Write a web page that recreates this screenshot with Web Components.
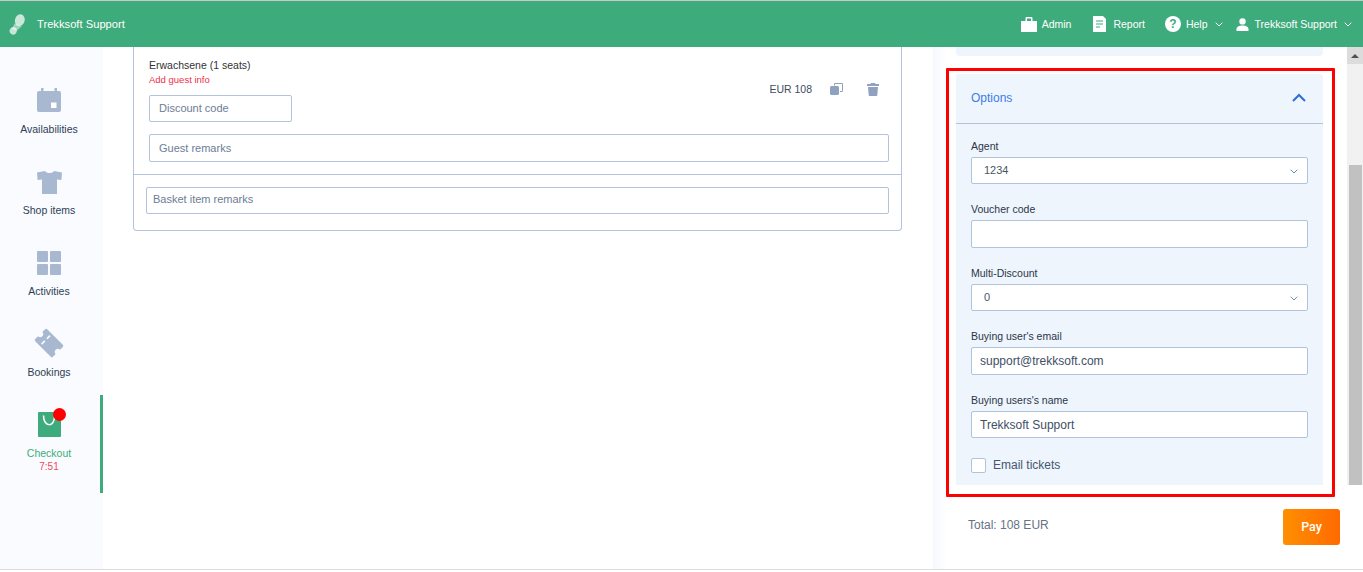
<!DOCTYPE html>
<html>
<head>
<meta charset="utf-8">
<title>Checkout</title>
<style>
  html, body { margin: 0; height: 572px; overflow: hidden; background: #fff; }
  body { font-family: "Liberation Sans", Arial, sans-serif; font-size: 12px; }
</style>
</head>
<body>
<checkout-app></checkout-app>

<script>
const CHEVRON = `<svg width="8" height="5" viewBox="0 0 8 5"><path d="M.7.7 4 4l3.3-3.3" fill="none" stroke="currentColor" stroke-width="1"/></svg>`;

class AppHeader extends HTMLElement {
  constructor() {
    super();
    this.attachShadow({ mode: "open" });
    this.shadowRoot.innerHTML = `
      <style>
        :host { display: flex; align-items: center; height: 46px; background: #3dab7b; color: #fff; font-size: 10.5px; }
        .brand { display: flex; align-items: center; margin-left: 9px; font-size: 11.2px; }
        .brand span { margin-left: 12px; }
        .links { display: flex; align-items: center; margin-left: auto; }
        .link { display: flex; align-items: center; }
        .link svg { display: block; }
        .admin { margin-right: 22px; }
        .admin span { margin-left: 5px; }
        .report { margin-right: 20px; }
        .report span { margin-left: 7px; }
        .help { margin-right: 13px; }
        .help span.t { margin-left: 5px; }
        .help svg:last-child, .user svg:last-child { margin-left: 7px; }
        .q { width: 16px; height: 16px; border-radius: 50%; background: #fff; color: #3dab7b; font-weight: bold; font-size: 12px; line-height: 16px; text-align: center; }
        .user { margin-right: 11px; }
        .user span { margin-left: 6px; }
      </style>
      <div class="brand">
        <svg width="16" height="21" viewBox="0 0 16 21">
          <g fill="#fff">
            <ellipse cx="10.8" cy="6.200" rx="4.800" ry="6" transform="rotate(18 10.800 6.200)" fill-opacity=".72"/>
            <path d="M5.500 9.500 13 12 8 16.500 3 15z" fill-opacity=".5"/>
            <ellipse cx="4.200" cy="16.800" rx="3.600" ry="3.800" transform="rotate(18 4.200 16.800)" fill-opacity=".7"/>
          </g>
        </svg>
        <span>Trekksoft Support</span>
      </div>
      <div class="links">
        <div class="link admin">
          <svg width="16" height="15" viewBox="0 0 16 15"><path d="M4.500 4V1.200C4.500.5 5 0 5.700 0h4.600c.7 0 1.200.5 1.200 1.200V4H16v11H0V4zM6 4h4V1.500H6z" fill="#fff" fill-rule="evenodd"/></svg>
          <span>Admin</span>
        </div>
        <div class="link report">
          <svg width="13" height="16" viewBox="0 0 13 16"><path d="M0 0h10l3 3v13H0z" fill="#fff"/><path d="M3 5h7M3 8h7M3 11h4" stroke="#3dab7b" stroke-width="1.200"/></svg>
          <span>Report</span>
        </div>
        <div class="link help">
          <div class="q">?</div>
          <span class="t">Help</span>
          ${CHEVRON}
        </div>
        <div class="link user">
          <svg width="13" height="13" viewBox="0 0 13 13"><circle cx="6.500" cy="3.400" r="3.200" fill="#fff"/><path d="M.5 13v-1.800C.5 8.800 3 7.500 6.500 7.500s6 1.300 6 3.700V13z" fill="#fff"/></svg>
          <span>Trekksoft Support</span>
          ${CHEVRON}
        </div>
      </div>
    `;
  }
}

class NavItem extends HTMLElement {
  constructor() {
    super();
    this.attachShadow({ mode: "open" });
    this.shadowRoot.innerHTML = `
      <style>
        :host { display: flex; flex-direction: column; align-items: center; height: 81px; width: 98px; font-size: 10.5px; color: #2f3e55; }
        :host([active]) { height: 82px; padding: 16px 2px 0 0; border-right: 3px solid #3dab7b; color: #3dab7b; }
        .icon { height: 24px; display: flex; align-items: center; justify-content: center; position: relative; }
        :host([active]) .icon { height: 26px; }
        .label { margin-top: 8px; line-height: 16px; white-space: nowrap; }
      </style>
      <div class="icon"><slot name="icon"></slot></div>
      <div class="label"><slot></slot></div>
      <slot name="extra"></slot>
    `;
  }
}

class SideNav extends HTMLElement {
  constructor() {
    super();
    this.attachShadow({ mode: "open" });
    this.shadowRoot.innerHTML = `
      <style>
        :host { display: block; width: 103px; flex: none; background: #f9fbff; padding-top: 42px; box-sizing: border-box; }
        .timer { font-size: 10px; line-height: 11px; color: #ef4a63; text-align: center; }
        .dot { position: absolute; top: -3px; left: 15px; width: 13px; height: 13px; border-radius: 50%; background: #ff0000; }
        svg { display: block; }
      </style>
      <nav-item>
        <svg slot="icon" width="24" height="24" viewBox="0 0 24 24" style="margin-top:-2px"><path d="M4 0h2.500v3h11V0H20v3h2a2 2 0 0 1 2 2v17a2 2 0 0 1-2 2H2a2 2 0 0 1-2-2V5a2 2 0 0 1 2-2h2z" fill="#a7b8d0"/><rect x="14" y="14.500" width="5.500" height="5.500" fill="#fff"/></svg>
        Availabilities
      </nav-item>
      <nav-item>
        <svg slot="icon" width="25" height="23" viewBox="0 0 25 23"><path d="M8 0c1 1.500 2.500 2 4.500 2S16 1.500 17 0l8 1.500-.6 7.500-4.400-.5V23H5V8.500L.6 9 0 1.500z" fill="#a7b8d0"/></svg>
        Shop items
      </nav-item>
      <nav-item>
        <svg slot="icon" width="24" height="24" viewBox="0 0 24 24"><g fill="#a7b8d0"><rect x="0" y="0" width="11" height="11" rx="1"/><rect x="13" y="0" width="11" height="11" rx="1"/><rect x="0" y="13" width="11" height="11" rx="1"/><rect x="13" y="13" width="11" height="11" rx="1"/></g></svg>
        Activities
      </nav-item>
      <nav-item style="height:63px">
        <svg slot="icon" width="32" height="32" viewBox="0 0 32 32" style="margin:-5px 0 -3px">
          <g transform="rotate(45 16 16)">
            <path d="M5 7.500h22a1.500 1.500 0 0 1 1.500 1.500v4a3 3 0 0 0 0 6v4a1.500 1.500 0 0 1-1.500 1.500H5A1.500 1.500 0 0 1 3.500 23v-4a3 3 0 0 0 0-6V9A1.500 1.500 0 0 1 5 7.500z" fill="#a7b8d0"/>
            <path d="M11.500 10v4.500M11.500 17.500V22" stroke="#f9fbff" stroke-width="1.700"/>
          </g>
        </svg>
        Bookings
      </nav-item>
      <nav-item active style="height:82px">
        <svg slot="icon" width="23" height="25" viewBox="0 0 23 25"><rect width="23" height="25" rx="1" fill="#3dab7b"/><path d="M5.500 3.500c0 12 11 12 11 1" fill="none" stroke="#fff" stroke-width="1.500"/></svg>
        <div class="dot" slot="icon"></div>
        Checkout
        <div class="timer" slot="extra">7:51</div>
      </nav-item>
    `;
  }
}

class TextBox extends HTMLElement {
  constructor() {
    super();
    this.attachShadow({ mode: "open" });
    this.shadowRoot.innerHTML = `
      <style>
        :host { display: flex; align-items: center; box-sizing: border-box; height: 28px; padding: 0 9px 0 8px; background: #fff; border: 1px solid #b3c3dc; border-radius: 2px; font-size: 12px; color: #3e4f66; white-space: nowrap; }
        :host([hint]) { font-size: 11px; color: #6c7d96; padding-left: 9px; }
        :host([select]) { height: 27px; padding-left: 12px; padding-bottom: 1px; font-size: 11px; color: #4a5568; }
        svg { display: none; margin-left: auto; color: #6d8fb5; }
        :host([select]) svg { display: block; margin-top: 2px; }
      </style>
      <slot></slot>
      <svg width="8" height="5" viewBox="0 0 8 5"><path d="M.7.7 4 4l3.300-3.300" fill="none" stroke="currentColor"/></svg>
    `;
  }
}

class FormField extends HTMLElement {
  constructor() {
    super();
    this.attachShadow({ mode: "open" });
    this.shadowRoot.innerHTML = `
      <style>
        :host { display: block; margin-bottom: 17px; }
        .label { font-size: 10.500px; line-height: 16px; color: #2b3648; margin-bottom: 3px; }
      </style>
      <div class="label">${this.getAttribute("label")}</div>
      <slot></slot>
    `;
  }
}

class BasketCard extends HTMLElement {
  constructor() {
    super();
    this.attachShadow({ mode: "open" });
    this.shadowRoot.innerHTML = `
      <style>
        :host { display: block; width: 769px; box-sizing: border-box; border: 1px solid #b3c3dc; border-top: 0; border-radius: 0 0 4px 4px; }
        .guest { padding: 10px 12px 12px 15px; border-bottom: 1px solid #b3c3dc; }
        .top { display: flex; justify-content: space-between; }
        .title { font-size: 10.500px; line-height: 16px; color: #333; }
        .warn { font-size: 9.500px; line-height: 14px; color: #ef304c; margin-bottom: 8px; }
        .discount { width: 143px; height: 27px; padding-bottom: 2px; }
        .guest-remarks { margin-top: 12px; }
        .price { display: flex; align-items: center; margin: 24px 10px 0 0; height: 16px; font-size: 10.500px; color: #3e4c60; }
        .price svg { display: block; }
        .copy { margin: 0 24px 0 18px; }
        .basket { padding: 12px 12px 16px; }
        .basket text-box { height: 27px; padding-left: 6px; padding-bottom: 4px; }
      </style>
      <div class="guest">
        <div class="top">
          <div>
            <div class="title">Erwachsene (1 seats)</div>
            <div class="warn">Add guest info</div>
            <text-box hint class="discount">Discount code</text-box>
          </div>
          <div class="price">
            <span>EUR 108</span>
            <svg class="copy" width="13" height="12" viewBox="0 0 13 12"><path d="M4 2.500V1.200C4 .5 4.500 0 5.200 0h6.600C12.500 0 13 .5 13 1.200v6.600c0 .7-.5 1.200-1.200 1.200H10V8h2V1H5v1.500z" fill="#8ea2c0"/><rect y="3" width="9" height="9" rx="1.500" fill="#8ea2c0"/></svg>
            <svg width="12" height="13" viewBox="0 0 12 13"><path d="M4 0h4l.5 1H12v2H0V1h3.500zM1 4h10l-.7 8a1 1 0 0 1-1 1H2.700a1 1 0 0 1-1-1z" fill="#8ea2c0"/></svg>
          </div>
        </div>
        <text-box hint class="guest-remarks">Guest remarks</text-box>
      </div>
      <div class="basket">
        <text-box hint>Basket item remarks</text-box>
      </div>
    `;
  }
}

class OptionsPanel extends HTMLElement {
  constructor() {
    super();
    this.attachShadow({ mode: "open" });
    this.shadowRoot.innerHTML = `
      <style>
        :host { display: block; background: #eef5fd; border-radius: 3px 3px 0 0; }
        .head { display: flex; align-items: center; justify-content: space-between; box-sizing: content-box; height: 47px; padding: 0 17px 2px 15px; border-bottom: 1px solid #b3c3dc; font-size: 12px; color: #3b7de8; }
        .head svg { display: block; }
        .body { padding: 14px 15px 12px; }
        .check { display: flex; align-items: center; margin-top: 20px; font-size: 12px; color: #46566e; }
        .check span { margin-top: -2px; }
        .box { width: 15px; height: 15px; box-sizing: border-box; background: #fff; border: 1px solid #b3c3dc; border-radius: 2px; margin-right: 7px; }
      </style>
      <div class="head">
        <span>Options</span>
        <svg width="14" height="9" viewBox="0 0 14 9"><path d="M1 8l6-6 6 6" fill="none" stroke="#2a6fdb" stroke-width="2"/></svg>
      </div>
      <div class="body">
        <form-field label="Agent"><text-box select>1234</text-box></form-field>
        <form-field label="Voucher code"><text-box></text-box></form-field>
        <form-field label="Multi-Discount"><text-box select>0</text-box></form-field>
        <form-field label="Buying user's email"><text-box>support@trekksoft.com</text-box></form-field>
        <form-field label="Buying users's name" style="margin-bottom:0"><text-box style="height:27px">Trekksoft Support</text-box></form-field>
        <div class="check"><div class="box"></div><span>Email tickets</span></div>
      </div>
    `;
  }
}

class PayPanel extends HTMLElement {
  constructor() {
    super();
    this.attachShadow({ mode: "open" });
    this.shadowRoot.innerHTML = `
      <style>
        :host { display: block; width: 414px; flex: none; box-sizing: border-box; background: linear-gradient(90deg, #f6f8fe, #fff 14px); }
        .stub { height: 9px; margin: 0 24px 12px 23px; background: #eef5fd; border-radius: 0 0 4px 4px; }
        .marked { margin: 0 12px 0 13px; padding: 3px 9px 9px 7px; border: 3px solid #ff0000; border-radius: 1px; }
        .foot { display: flex; align-items: center; justify-content: space-between; margin: 12px 7px 0 35px; font-size: 12px; color: #667285; }
        .foot span { margin-top: -4px; }
        .pay { width: 57px; height: 36px; line-height: 36px; text-align: center; color: #fff; font-family: Roboto, sans-serif; font-weight: 500; font-size: 12.500px; border-radius: 3px; background: linear-gradient(90deg, #ff8f00, #ff6a00); }
      </style>
      <div class="stub"></div>
      <div class="marked"><options-panel></options-panel></div>
      <div class="foot"><span>Total: 108 EUR</span><div class="pay">Pay</div></div>
    `;
  }
}

class PageScrollbar extends HTMLElement {
  constructor() {
    super();
    this.attachShadow({ mode: "open" });
    this.shadowRoot.innerHTML = `
      <style>
        :host { display: block; width: 16px; flex: none; height: 438px; background: #f1f1f1; }
        .up { display: flex; align-items: center; justify-content: center; height: 17px; background: #dcdcdc; }
        .up i { width: 0; height: 0; border: 4px solid transparent; border-top: 0; border-bottom: 4px solid #505050; }
        .thumb { height: 320px; margin: 101px 1px 0 2px; background: #c1c1c1; }
      </style>
      <div class="up"><i></i></div>
      <div class="thumb"></div>
    `;
  }
}

class CheckoutApp extends HTMLElement {
  constructor() {
    super();
    this.attachShadow({ mode: "open" });
    this.shadowRoot.innerHTML = `
      <style>
        :host { display: flex; flex-direction: column; height: 572px; border-top: 1px solid #c9c9c9; box-sizing: border-box; }
        .row { display: flex; height: 522px; border-bottom: 1px solid #dcdcdc; }
        .main { flex: 1; padding-left: 30px; overflow: hidden; }
      </style>
      <app-header></app-header>
      <div class="row">
        <side-nav></side-nav>
        <div class="main"><basket-card></basket-card></div>
        <pay-panel></pay-panel>
        <page-scrollbar></page-scrollbar>
      </div>
    `;
  }
}

customElements.define("nav-item", NavItem);
customElements.define("text-box", TextBox);
customElements.define("form-field", FormField);
customElements.define("app-header", AppHeader);
customElements.define("side-nav", SideNav);
customElements.define("basket-card", BasketCard);
customElements.define("options-panel", OptionsPanel);
customElements.define("pay-panel", PayPanel);
customElements.define("page-scrollbar", PageScrollbar);
customElements.define("checkout-app", CheckoutApp);
</script>
</body>
</html>
